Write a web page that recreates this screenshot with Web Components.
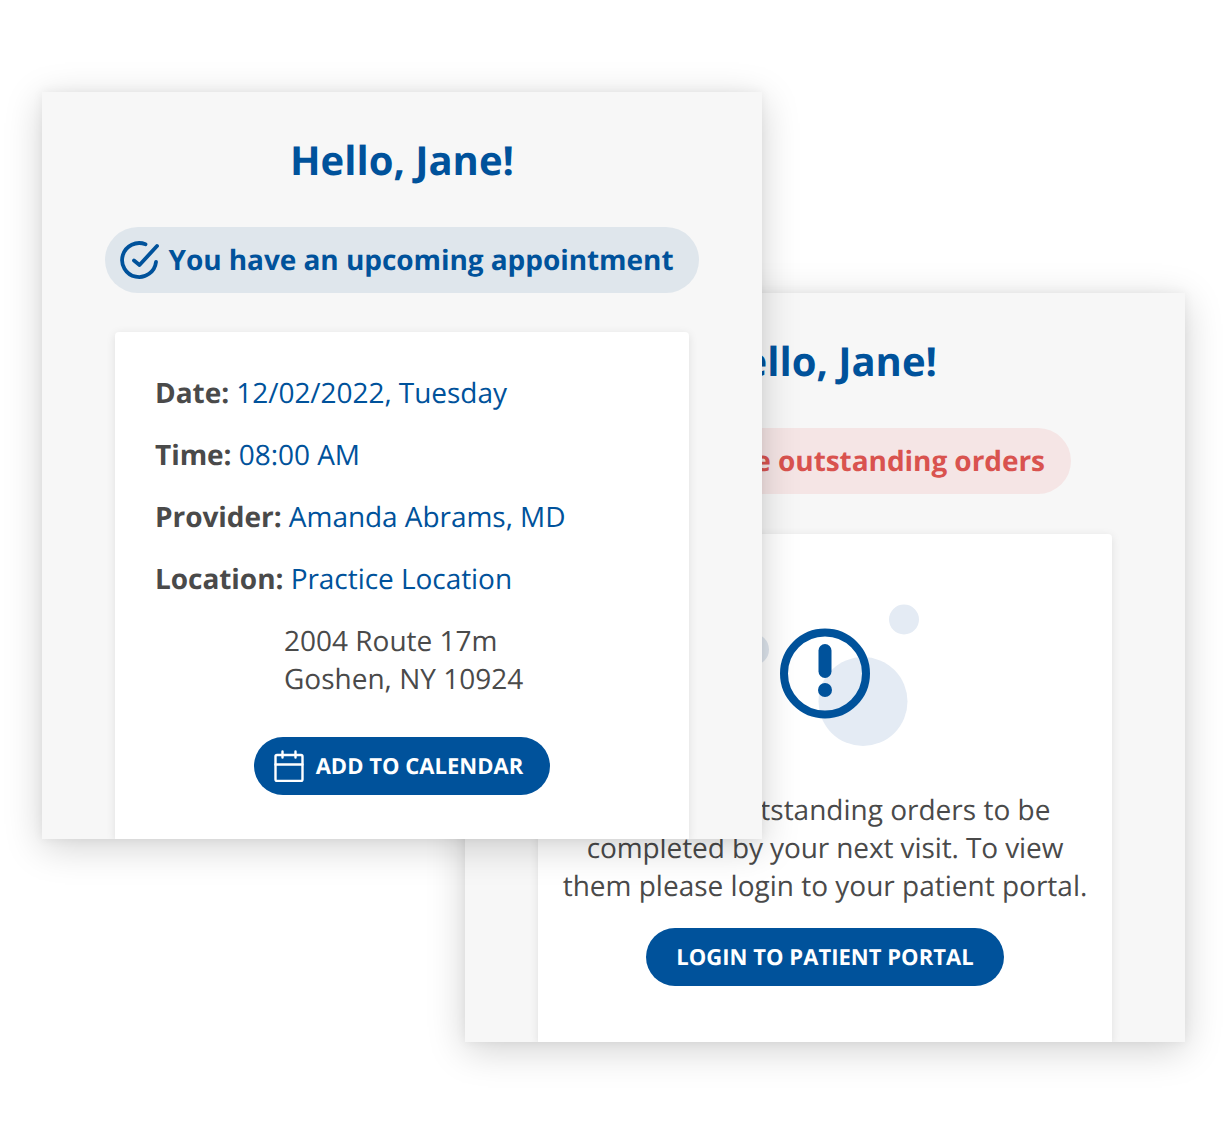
<!DOCTYPE html>
<html>
<head>
<meta charset="utf-8">
<title>Patient cards</title>
<style>
  html, body { margin: 0; background: #fff; }
  body { width: 1225px; height: 1134px; overflow: hidden; font-family: "Open Sans", sans-serif; text-rendering: geometricPrecision; }
  .back { position: absolute; left: 465px; top: 293px; --card-h: 749px; --panel-gap: 40px; }
  .front { position: absolute; left: 42px; top: 92px; --card-h: 747px; --panel-gap: 39px; }
  .row { color: #4a4a4a; }
  .addr { margin-left: 129px; }
  .outstanding { display: flex; flex-direction: column; align-items: center; }
</style>
</head>
<body>
<template id="card-tpl">
  <style>
    :host {
      display: flex;
      flex-direction: column;
      align-items: center;
      box-sizing: border-box;
      width: 720px;
      height: var(--card-h);
      overflow: hidden;
      background: #f7f7f7;
      box-shadow: 0 8px 36px rgba(0, 0, 0, 0.18), 0 0 10px rgba(0, 0, 0, 0.06);
      font-family: "Open Sans", sans-serif;
    }
    h1 {
      margin: 39px 0 0;
      font-size: 40px;
      line-height: 58px;
      font-weight: 700;
      color: #00529b;
    }
    .panel {
      box-sizing: border-box;
      flex: 1;
      width: 574px;
      margin-top: var(--panel-gap);
      background: #fff;
      border-radius: 4px 4px 0 0;
      box-shadow: 0 2px 10px rgba(0, 0, 0, 0.1);
    }
  </style>
  <h1>Hello, Jane!</h1>
  <slot name="status"></slot>
  <div class="panel"><slot></slot></div>
</template>

<template id="pill-tpl">
  <style>
    :host {
      display: flex;
      align-items: center;
      gap: 9px;
      box-sizing: border-box;
      height: 66px;
      margin-top: 38px;
      padding: 0 26px 0 15px;
      border-radius: 33px;
      background: var(--pill-bg, #dfe6ec);
      color: var(--pill-fg, #00529b);
      font-size: 28px;
      font-weight: 700;
      letter-spacing: -0.06px;
      white-space: nowrap;
    }
    ::slotted(svg) { flex: none; }
  </style>
  <slot></slot>
</template>

<template id="btn-tpl">
  <style>
    :host {
      display: inline-flex;
      align-items: center;
      justify-content: center;
      gap: 11px;
      box-sizing: border-box;
      height: 58px;
      padding: 0 27px 0 19px;
      border-radius: 29px;
      background: #00529b;
      color: #fff;
      font-size: 22px;
      font-weight: 700;
      letter-spacing: 0.03px;
      white-space: nowrap;
    }
    ::slotted(svg) { flex: none; }
  </style>
  <slot></slot>
</template>

<template id="detail-tpl">
  <style>
    :host {
      display: block;
      font-size: 28px;
      line-height: 38px;
      letter-spacing: -0.05px;
      color: #00529b;
      margin-bottom: 24px;
    }
    b { color: #4a4a4a; font-weight: 700; }
  </style>
  <b id="label"></b> <slot></slot>
</template>

<div class="back">
  <summary-card>
    <status-pill slot="status" style="--pill-bg:#f5e5e5;--pill-fg:#d9534f">
      <svg width="40" height="40" viewBox="0 0 40 40" fill="none" stroke="#d9534f" stroke-width="3.8"><circle cx="19" cy="20" r="17"/></svg>
      You have outstanding orders
    </status-pill>
    <div class="outstanding">
      <alert-art></alert-art>
      <div class="row" style="font-size:28px;line-height:38px;text-align:center;margin-top:37px">You have outstanding orders to be<br><span style="letter-spacing:-0.1px">completed by your next visit. To view</span><br>them please login to your patient portal.</div>
      <pill-button style="margin-top:23px;padding:0 30px">LOGIN TO PATIENT PORTAL</pill-button>
    </div>
  </summary-card>
</div>

<div class="front">
  <summary-card>
    <status-pill slot="status">
      <svg width="40" height="40" viewBox="0 0 40 40" fill="none" stroke="#00529b" stroke-width="3.8" stroke-linecap="round" stroke-linejoin="round">
        <path d="M36 22A17 17 0 1 1 25.500 4.300"/>
        <path d="M14 20.500l5.500 4.500L37 6"/>
      </svg>
      You have an upcoming appointment
    </status-pill>
    <div style="padding:42px 0 0 40px">
      <detail-row label="Date:">12/02/2022, Tuesday</detail-row>
      <detail-row label="Time:">08:00 AM</detail-row>
      <detail-row label="Provider:">Amanda Abrams, MD</detail-row>
      <detail-row label="Location:">Practice Location</detail-row>
      <div class="row addr" style="font-size:28px;line-height:38px">2004 Route 17m<br>Goshen, NY 10924</div>
      <div style="display:flex;justify-content:center;margin:39px 40px 0 0">
        <pill-button>
          <svg width="32" height="32" viewBox="0 0 32 32" fill="none" stroke="#fff" stroke-width="2.4" stroke-linecap="round" stroke-linejoin="round">
            <rect x="2.500" y="5" width="27" height="26" rx="1.500"/>
            <path d="M2.500 14.500h27M9.500 1.500v6M22.500 1.500v6"/>
          </svg>
          ADD TO CALENDAR
        </pill-button>
      </div>
    </div>
  </summary-card>
</div>

<script>
function fromTemplate(host, id) {
  host.attachShadow({ mode: 'open' });
  host.shadowRoot.appendChild(document.getElementById(id).content.cloneNode(true));
}

class SummaryCard extends HTMLElement {
  constructor() { super(); fromTemplate(this, 'card-tpl'); }
}

class StatusPill extends HTMLElement {
  constructor() { super(); fromTemplate(this, 'pill-tpl'); }
}

class PillButton extends HTMLElement {
  constructor() { super(); fromTemplate(this, 'btn-tpl'); }
}

class DetailRow extends HTMLElement {
  constructor() { super(); fromTemplate(this, 'detail-tpl'); }
  connectedCallback() {
    this.shadowRoot.getElementById('label').textContent = this.getAttribute('label');
  }
}

// exclamation icon sitting on the pale bubbles
class AlertArt extends HTMLElement {
  constructor() {
    super();
    this.attachShadow({ mode: 'open' });
    this.shadowRoot.innerHTML = `
      <style>
        :host { display: block; width: 210px; height: 150px; margin-top: 70px; }
        svg { display: block; }
      </style>
      <svg width="210" height="150" viewBox="0 0 210 150">
        <circle cx="184" cy="15.500" r="15" fill="#e4ebf4"/>
        <circle cx="143" cy="97.500" r="44.500" fill="#e4ebf4"/>
        <circle cx="33" cy="45.500" r="16" fill="#dfe6ee"/>
        <circle cx="105" cy="69.500" r="41" fill="none" stroke="#00529b" stroke-width="8"/>
        <rect x="98.500" y="40" width="13" height="34" rx="6.500" fill="#00529b"/>
        <circle cx="105" cy="86" r="7" fill="#00529b"/>
      </svg>`;
  }
}

customElements.define('summary-card', SummaryCard);
customElements.define('status-pill', StatusPill);
customElements.define('pill-button', PillButton);
customElements.define('detail-row', DetailRow);
customElements.define('alert-art', AlertArt);
</script>
</body>
</html>
